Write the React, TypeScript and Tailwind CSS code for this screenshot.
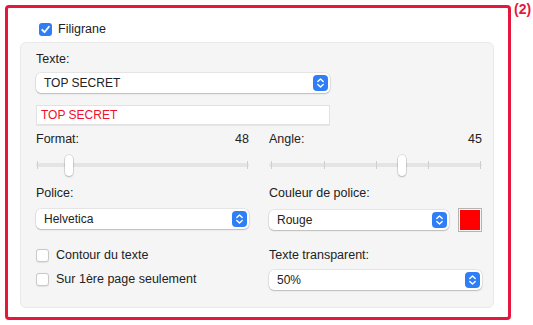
import React from "react";

function Stepper() {
  return (
    <div className="w-[15px] h-[16px] rounded-[4px] bg-[#2f7ef5] flex items-center justify-center shrink-0">
      <svg width="15" height="16" viewBox="0 0 15 16">
        <path d="M4.8 6.6 L7.5 4.1 L10.2 6.6" fill="none" stroke="white" strokeWidth="1.4" strokeLinecap="round" strokeLinejoin="round" />
        <path d="M4.8 9.4 L7.5 11.9 L10.2 9.4" fill="none" stroke="white" strokeWidth="1.4" strokeLinecap="round" strokeLinejoin="round" />
      </svg>
    </div>
  );
}

function Select({ value, className }: { value: string; className: string }) {
  return (
    <div
      className={
        "h-[20px] bg-white rounded-[5px] flex items-center justify-between pl-[8px] pr-[2px] shadow-[0_0_0_0.5px_rgba(0,0,0,0.13),0_1px_1.5px_rgba(0,0,0,0.18)] " +
        className
      }
    >
      <span className="text-[12px] text-[#222] leading-[20px]">{value}</span>
      <Stepper />
    </div>
  );
}

function Slider({ ticks, thumb }: { ticks: number[]; thumb: number }) {
  return (
    <div className="relative h-[21px] w-[213px]">
      <div className="absolute left-0 right-0 top-[8px] h-[4px] rounded-full bg-[#e4e4e4]" />
      {ticks.map((t) => (
        <div key={t} className="absolute top-[6px] h-[8px] w-[1px] bg-[#cfcfcf]" style={{ left: t }} />
      ))}
      <div
        className="absolute top-0 h-[21px] w-[8px] rounded-full bg-white shadow-[0_0_0_0.5px_rgba(0,0,0,0.18),0_1px_2px_rgba(0,0,0,0.2)]"
        style={{ left: thumb }}
      />
    </div>
  );
}

function Box({ checked }: { checked?: boolean }) {
  if (checked) {
    return (
      <div className="w-[13px] h-[13px] rounded-[3px] bg-[#2f7ef5] flex items-center justify-center shrink-0">
        <svg width="13" height="13" viewBox="0 0 13 13">
          <path d="M3.2 6.8 L5.5 9.2 L9.9 3.8" fill="none" stroke="white" strokeWidth="1.8" strokeLinecap="round" strokeLinejoin="round" />
        </svg>
      </div>
    );
  }
  return (
    <div className="w-[13px] h-[13px] rounded-[3px] bg-white border border-[#c9c9c9] shadow-[0_0.5px_1px_rgba(0,0,0,0.08)] shrink-0" />
  );
}

export default function App() {
  const font = { fontFamily: '"Liberation Sans", Arial, sans-serif' };
  return (
    <div className="w-[533px] h-[325px] bg-white flex items-start pl-[5px] pt-[5px] text-[#222]" style={font}>
      <div className="w-[506px] h-[315px] border-[3px] border-[#e5173f] rounded-[4px] flex flex-col pl-[12px] pt-[15px] shrink-0">
        <div className="flex items-center h-[13px] ml-[19px] gap-[6px]">
          <Box checked />
          <span className="text-[12.5px] leading-[13px]">Filigrane</span>
        </div>
        <div className="mt-[6px] w-[474px] h-[266px] bg-[#f5f5f5] border border-[#e9e9e9] rounded-[6px] pl-[15px] pt-[9px] flex flex-col">
          <div className="text-[12.5px] leading-[15px]">Texte:</div>
          <Select value="TOP SECRET" className="mt-[6px] w-[294px]" />
          <div className="mt-[12px] w-[294px] h-[20px] bg-white border border-[#e2e2e2] shadow-[0_1px_0_rgba(0,0,0,0.06)] flex items-center pl-[4px]">
            <span className="text-[12px] text-[#f0102c] leading-[18px]">TOP SECRET</span>
          </div>
          <div className="mt-[7px] flex gap-[20px]">
            <div className="w-[213px] flex flex-col">
              <div className="flex justify-between text-[12.5px] leading-[15px]">
                <span>Format:</span>
                <span>48</span>
              </div>
              <div className="mt-[8px]">
                <Slider ticks={[1, 211]} thumb={29} />
              </div>
              <div className="mt-[10px] text-[12.5px] leading-[15px]">Police:</div>
              <Select value="Helvetica" className="mt-[8px] w-[213px]" />
              <div className="mt-[20px] flex items-center gap-[7px] h-[13px]">
                <Box />
                <span className="text-[12.5px] leading-[13px]">Contour du texte</span>
              </div>
              <div className="mt-[11px] flex items-center gap-[7px] h-[13px]">
                <Box />
                <span className="text-[12.5px] leading-[13px]">Sur 1ère page seulement</span>
              </div>
            </div>
            <div className="w-[213px] flex flex-col">
              <div className="flex justify-between text-[12.5px] leading-[15px]">
                <span>Angle:</span>
                <span>45</span>
              </div>
              <div className="mt-[8px]">
                <Slider ticks={[2, 55, 107, 159, 211]} thumb={129} />
              </div>
              <div className="mt-[10px] text-[12.5px] leading-[15px]">Couleur de police:</div>
              <div className="mt-[7px] h-[24px] flex items-center justify-between">
                <Select value="Rouge" className="w-[180px]" />
                <div className="w-[24px] h-[24px] border border-[#b4b4b4] bg-white p-[1px]">
                  <div className="w-full h-full bg-[#ff0000]" />
                </div>
              </div>
              <div className="mt-[16px] text-[12.5px] leading-[15px]">Texte transparent:</div>
              <Select value="50%" className="mt-[7px] w-[213px]" />
            </div>
          </div>
        </div>
      </div>
      <span className="ml-[3px] -mt-[4px] text-[14px] font-bold text-[#e5173f] leading-[16px]">(2)</span>
    </div>
  );
}
